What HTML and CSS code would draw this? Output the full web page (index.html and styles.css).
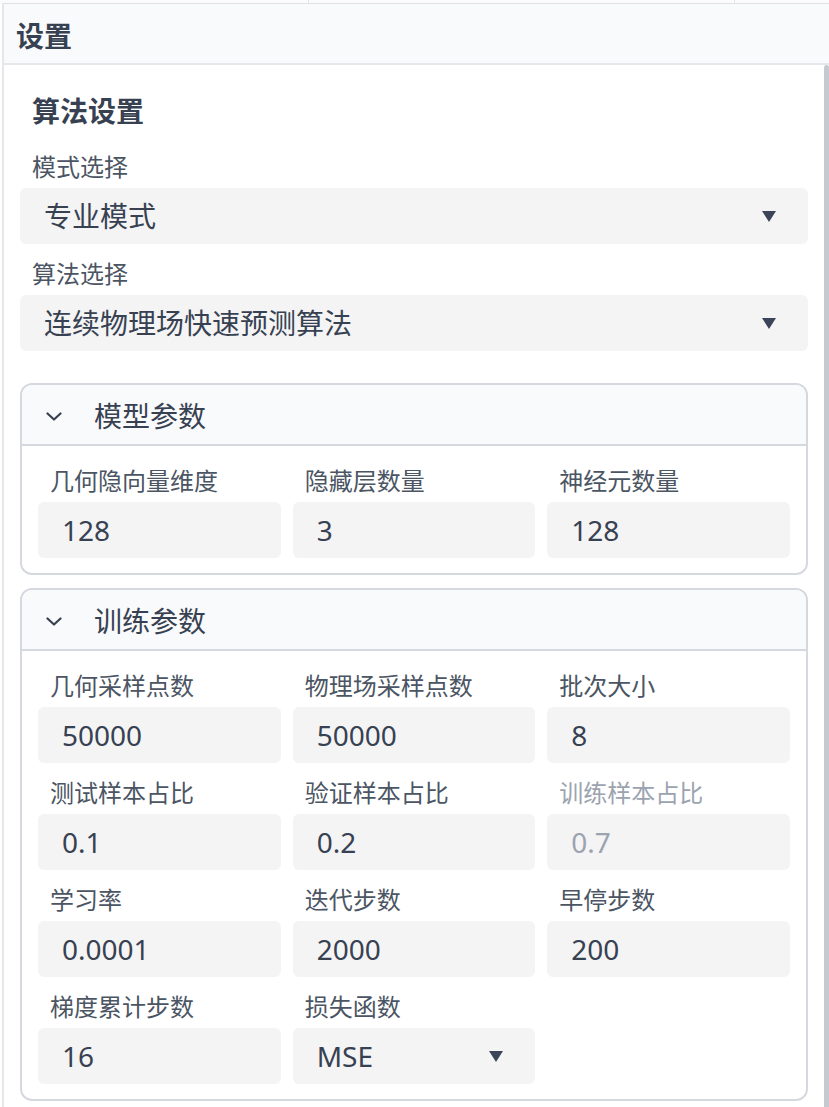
FILE: index.html
```html
<!DOCTYPE html>
<html lang="zh-CN">
<head>
    <meta charset="UTF-8">
    <meta name="viewport" content="width=device-width, initial-scale=1.0">
    <title>设置</title>
    <link rel="stylesheet" href="styles.css">
</head>
<body>
    <div class="topbar">
        <span class="tab"></span>
        <span class="tab"></span>
        <span class="tab"></span>
    </div>

    <section class="panel">
        <header class="panel-head">设置</header>

        <div class="panel-main">
            <div class="panel-body">
                <h2 class="group-title">算法设置</h2>

                <div class="field">
                    <label class="field-label">模式选择</label>
                    <div class="select">
                        <span>专业模式</span>
                        <svg class="caret" width="14" height="11" viewBox="0 0 14 11"><polygon points="0,0 14,0 7,11"/></svg>
                    </div>
                </div>

                <div class="field">
                    <label class="field-label">算法选择</label>
                    <div class="select">
                        <span>连续物理场快速预测算法</span>
                        <svg class="caret" width="14" height="11" viewBox="0 0 14 11"><polygon points="0,0 14,0 7,11"/></svg>
                    </div>
                </div>

                <div class="card first">
                    <div class="card-head">
                        <svg class="chevron" width="16" height="9" viewBox="0 0 16 9"><polyline points="1.5,1.5 8,7.5 14.5,1.5"/></svg>
                        <span>模型参数</span>
                    </div>
                    <div class="card-grid">
                        <div class="field">
                            <label class="field-label">几何隐向量维度</label>
                            <div class="input">128</div>
                        </div>
                        <div class="field">
                            <label class="field-label">隐藏层数量</label>
                            <div class="input">3</div>
                        </div>
                        <div class="field">
                            <label class="field-label">神经元数量</label>
                            <div class="input">128</div>
                        </div>
                    </div>
                </div>

                <div class="card">
                    <div class="card-head">
                        <svg class="chevron" width="16" height="9" viewBox="0 0 16 9"><polyline points="1.5,1.5 8,7.5 14.5,1.5"/></svg>
                        <span>训练参数</span>
                    </div>
                    <div class="card-grid">
                        <div class="field">
                            <label class="field-label">几何采样点数</label>
                            <div class="input">50000</div>
                        </div>
                        <div class="field">
                            <label class="field-label">物理场采样点数</label>
                            <div class="input">50000</div>
                        </div>
                        <div class="field">
                            <label class="field-label">批次大小</label>
                            <div class="input">8</div>
                        </div>

                        <div class="field">
                            <label class="field-label">测试样本占比</label>
                            <div class="input">0.1</div>
                        </div>
                        <div class="field">
                            <label class="field-label">验证样本占比</label>
                            <div class="input">0.2</div>
                        </div>
                        <div class="field disabled">
                            <label class="field-label">训练样本占比</label>
                            <div class="input">0.7</div>
                        </div>

                        <div class="field">
                            <label class="field-label">学习率</label>
                            <div class="input">0.0001</div>
                        </div>
                        <div class="field">
                            <label class="field-label">迭代步数</label>
                            <div class="input">2000</div>
                        </div>
                        <div class="field">
                            <label class="field-label">早停步数</label>
                            <div class="input">200</div>
                        </div>

                        <div class="field">
                            <label class="field-label">梯度累计步数</label>
                            <div class="input">16</div>
                        </div>
                        <div class="field">
                            <label class="field-label">损失函数</label>
                            <div class="select">
                                <span>MSE</span>
                                <svg class="caret" width="14" height="11" viewBox="0 0 14 11"><polygon points="0,0 14,0 7,11"/></svg>
                            </div>
                        </div>
                    </div>
                </div>
            </div>

            <div class="scrollbar"></div>
        </div>
    </section>
</body>
</html>
```

FILE: styles.css
```css
body {
    margin: 0;
    padding: 0;
    font-family: "Noto Sans", "Noto Sans CJK SC", sans-serif;
    color: #374151;
    background: #ffffff;
    overflow: hidden;
}

/* thin strip left over from the tabs above */
.topbar {
    display: flex;
    height: 3px;
    background: #fbfbfc;
}

.tab { border-right: 1px solid #e3e5e8; }
.tab:nth-child(1) { width: 308px; }
.tab:nth-child(2) { width: 425px; }
.tab:nth-child(3) { flex: 1; border-right: none; }

.panel {
    margin-left: 2px;
    border-top: 1px solid #dfe2e6;
    border-left: 2px solid #e5e7eb;
    height: calc(100vh - 4px);
    display: flex;
    flex-direction: column;
}

.panel-head {
    background: #f9fafb;
    border-bottom: 2px solid #e5e7eb;
    padding: 5px 12px 0;
    height: 54px;
    line-height: 54px;
    font-size: 28px;
    font-weight: 700;
    color: #374151;
}

.panel-main {
    flex: 1;
    display: flex;
    min-height: 0;
}

.panel-body {
    flex: 1;
    padding: 26px 16px 0;
    overflow: hidden;
}

.scrollbar {
    width: 5px;
    background: #c5cad2;
    border-radius: 3px 3px 0 0;
}

.group-title {
    margin: 0 0 20px 12px;
    font-size: 28px;
    line-height: 40px;
    font-weight: 700;
    color: #374151;
}

.field {
    display: flex;
    flex-direction: column;
    margin-bottom: 14px;
}

.field-label {
    padding-left: 12px;
    margin-bottom: 5px;
    font-size: 24px;
    line-height: 32px;
    color: #4b5563;
}

.select, .input {
    height: 56px;
    box-sizing: border-box;
    background: #f4f4f5;
    border-radius: 6px;
    padding: 0 24px;
    font-size: 28px;
    line-height: 56px;
    color: #374151;
}

.select {
    display: flex;
    align-items: center;
    justify-content: space-between;
    padding-right: 32px;
}

.caret { fill: #3c4459; flex-shrink: 0; }

.field.disabled .field-label,
.field.disabled .input { color: #9ca3af; }

.card {
    border: 2px solid #d5d9df;
    border-radius: 12px;
    overflow: hidden;
    margin-bottom: 13px;
}

.card.first { margin-top: 32px; }

.card-head {
    display: flex;
    align-items: center;
    gap: 32px;
    height: 56px;
    padding: 3px 24px 0;
    background: #f9fafb;
    border-bottom: 2px solid #d5d9df;
    font-size: 28px;
    line-height: 56px;
    color: #374151;
}

.chevron {
    fill: none;
    stroke: #374151;
    stroke-width: 2.2;
    stroke-linecap: round;
    stroke-linejoin: round;
    flex-shrink: 0;
}

.card-grid {
    display: grid;
    grid-template-columns: repeat(3, 1fr);
    column-gap: 12px;
    row-gap: 14px;
    padding: 19px 16px 15px;
}

.card-grid .field { margin-bottom: 0; }
.card-grid .field-label { padding-left: 12px; }
```
